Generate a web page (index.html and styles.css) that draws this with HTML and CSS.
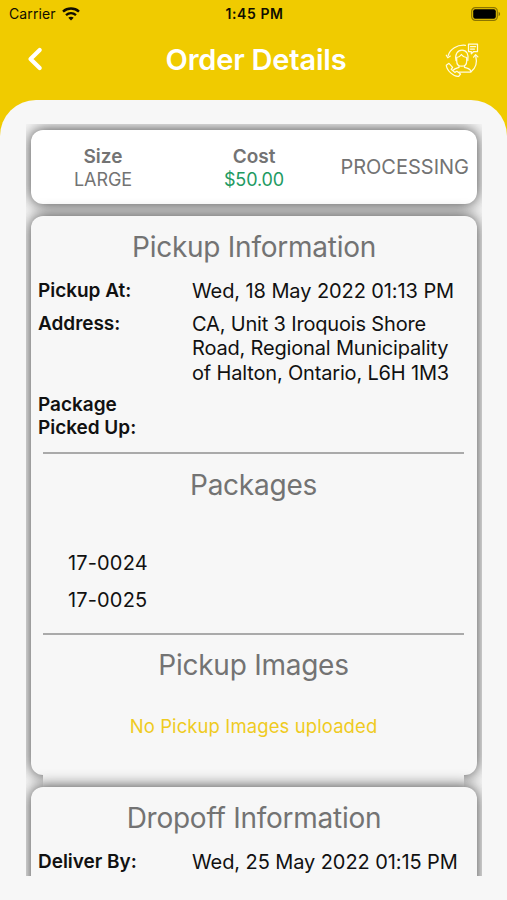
FILE: index.html
```
<!DOCTYPE html>
<html lang="en">
<head>
  <meta charset="UTF-8" />
  <meta name="viewport" content="width=device-width, initial-scale=1.0"/>
  <title>Order Details</title>
  <link rel="stylesheet" href="styles.css">
</head>
<body>
  <header class="header">
    <div class="status-bar">
      <div class="carrier">
        <span>Carrier</span>
        <svg class="wifi" viewBox="0 0 18 14" fill="none" stroke="#110e00">
          <path d="M1 4.600C5.600.6 12.400.6 17 4.600" stroke-width="2.500"/>
          <path d="M4 8.200c2.900-2.600 7.100-2.600 10 0" stroke-width="2.300"/>
          <path d="M9 13.600 6.300 10.800c1.500-1.400 3.900-1.400 5.400 0z" fill="#110e00" stroke="none"/>
        </svg>
      </div>
      <span class="time">1:45 PM</span>
      <svg class="battery" viewBox="0 0 30 14">
        <rect x=".7" y=".7" width="25.600" height="12.600" rx="3.600" fill="none" stroke="#110e00" stroke-opacity=".45" stroke-width="1.200"/>
        <rect x="2.200" y="2.200" width="22.600" height="9.600" rx="2" fill="#000"/>
        <path d="M27.600 4.800c2 .8 2 3.600 0 4.400z" fill="#110e00" fill-opacity=".5"/>
      </svg>
    </div>
    <div class="nav-bar">
      <svg class="back" viewBox="0 0 16 24" fill="none" stroke="#fff" stroke-width="4.200" stroke-linecap="round" stroke-linejoin="round">
        <path d="M12.700 3 3.500 12l9.200 9"/>
      </svg>
      <h1>Order Details</h1>
      <svg class="support" viewBox="0 0 36 36" fill="none" stroke="#fffbe0" stroke-width="1.250" stroke-linecap="round" stroke-linejoin="round">
        <path d="M4.200 14.500C6 8 13 3.500 21.500 4.300"/>
        <path d="m2.300 14.200 1.500 2.600 2.500-1.700"/>
        <path d="M31.800 15.500c1.500 6-.2 11.500-4.500 15"/>
        <path d="m29.600 16.200 2-2.500 2.300 2.200"/>
        <path d="M24.500 3.200h9v7.300h-3.800l-2.400 2.300v-2.300h-2.800z"/>
        <path d="M26.500 5.700h5M26.500 8h4"/>
        <path d="M12 19.500c-1.400-6 1.600-10.500 6-10.500s7.200 4.500 5.800 10.500"/>
        <path d="M12.700 16.500c2.200-.2 3.600-1.300 4.700-3 1.500 2 3.200 2.900 5.300 3v3.400c0 3.200-2.100 5.300-5 5.300s-5-2.100-5-5.300z"/>
        <path d="M15 25v1.400c-2.200.8-4.300 1.200-5.500 2.600M20.500 25v1.400c2.700 1 6.300 1 6.300 4.600H15"/>
        <path d="M2.300 24.200 5 22.300l3.600 4-1.400 2 3.600 3.100 2.100-1.200 3.600 2.800-1.800 2.300C9.500 36 2.600 29.200 2.300 24.200z"/>
      </svg>
    </div>
  </header>

  <main class="sheet">
    <div class="scroll">
      <section class="card summary">
        <div class="summary-item">
          <span class="summary-label">Size</span>
          <span class="summary-value">LARGE</span>
        </div>
        <div class="summary-item">
          <span class="summary-label">Cost</span>
          <span class="summary-value cost">$50.00</span>
        </div>
        <div class="summary-status">PROCESSING</div>
      </section>

      <section class="card pickup">
        <h2>Pickup Information</h2>
        <dl class="details">
          <dt>Pickup At:</dt>
          <dd class="date">Wed, 18 May 2022 01:13 PM</dd>
          <dt>Address:</dt>
          <dd>CA, Unit 3 Iroquois Shore<br>Road, Regional Municipality<br>of Halton, Ontario, L6H 1M3</dd>
          <dt>Package<br>Picked Up:</dt>
          <dd></dd>
        </dl>
        <div class="block packages">
          <h2>Packages</h2>
          <ul>
            <li>17-0024</li>
            <li>17-0025</li>
          </ul>
        </div>
        <div class="block images">
          <h2>Pickup Images</h2>
          <p>No Pickup Images uploaded</p>
        </div>
      </section>

      <section class="card dropoff">
        <h2>Dropoff Information</h2>
        <dl class="details">
          <dt>Deliver By:</dt>
          <dd class="date">Wed, 25 May 2022 01:15 PM</dd>
        </dl>
      </section>
    </div>
  </main>
</body>
</html>
```
FILE: styles.css
```
:root {
  --yellow: #f0cb00;
  --page: #f7f7f7;
  --gray: #737373;
  --text: #111;
  --green: #219a62;
}

* {
  margin: 0;
  padding: 0;
  box-sizing: border-box;
}

body {
  background-color: var(--yellow);
  color: var(--text);
  font-family: Inter, "Liberation Sans", sans-serif;
  height: 900px;
  display: flex;
  flex-direction: column;
  overflow: hidden;
}

.header {
  height: 100px;
  flex-shrink: 0;
}

.status-bar {
  height: 27px;
  padding: 0 6px 0 9px;
  display: grid;
  grid-template-columns: 1fr auto 1fr;
  align-items: center;
  font-size: 14px;
  color: #110e00;
}

.carrier {
  display: flex;
  align-items: center;
  gap: 6px;
  letter-spacing: 0.1px;
}

.wifi {
  width: 18px;
  height: 14px;
}

.time {
  font-weight: 600;
  letter-spacing: 0.6px;
  margin-right: 1px;
}

.battery {
  width: 30px;
  height: 14px;
  justify-self: end;
}

.nav-bar {
  height: 64px;
  padding: 0 27px;
  display: grid;
  grid-template-columns: 36px 1fr 36px;
  align-items: center;
}

.back {
  width: 16px;
  height: 24px;
}

h1 {
  color: #fff;
  font-size: 29px;
  font-weight: 600;
  letter-spacing: -0.2px;
  text-align: center;
  padding-left: 5px;
}

.support {
  width: 36px;
  height: 36px;
}

.sheet {
  flex: 1;
  min-height: 0;
  background-color: var(--page);
  border-radius: 36px 36px 0 0;
  padding: 24px 25px 0 26px;
}

.scroll {
  height: 752px;
  padding: 6px 5px 0;
  overflow: hidden;
}

.card {
  background-color: var(--page);
  border-radius: 12px;
  box-shadow: 0 0 15px rgba(0, 0, 0, 0.76);
  margin-bottom: 12px;
}

.summary {
  background-color: #fff;
  height: 74px;
  display: grid;
  grid-template-columns: 144px 158px 1fr;
  align-items: center;
  color: var(--gray);
}

.summary-item {
  display: flex;
  flex-direction: column;
  align-items: center;
  line-height: 23px;
  padding-top: 1px;
}

.summary-label {
  font-size: 19px;
  font-weight: 600;
}

.summary-value {
  font-size: 18px;
  letter-spacing: -0.1px;
}

.cost {
  color: var(--green);
}

.summary-status {
  font-size: 20px;
  text-align: right;
  padding-right: 8px;
}

h2 {
  color: var(--gray);
  font-size: 28px;
  font-weight: 400;
  letter-spacing: -0.25px;
  line-height: 34px;
  text-align: center;
}

.pickup {
  height: 559px;
  padding-top: 14px;
}

.details {
  display: grid;
  grid-template-columns: 154px 1fr;
  row-gap: 8px;
  padding: 15px 0 0 7px;
  font-size: 20px;
  letter-spacing: -0.17px;
  line-height: 24.5px;
}

.date {
  letter-spacing: -0.09px;
}

dt {
  font-size: 19px;
  font-weight: 600;
  letter-spacing: -0.03px;
  line-height: 23px;
}

.block {
  background-color: var(--page);
  border-top: 2px solid #aaa;
  margin: 0 13px 0 12px;
  padding-top: 14px;
}

.packages {
  height: 181px;
  margin-top: 13px;
}

.packages ul {
  list-style: none;
  padding: 43px 0 0 25px;
  font-size: 20px;
  letter-spacing: 0.15px;
  line-height: 37px;
}

/* runs past the card's bottom edge, up to the next card */
.images {
  height: 154px;
  padding-top: 13px;
}

.images p {
  color: #efcb1f;
  font-size: 18.5px;
  letter-spacing: 0.1px;
  line-height: 24px;
  text-align: center;
  margin-top: 32px;
}

.dropoff {
  height: 200px;
  padding-top: 14px;
}
```
